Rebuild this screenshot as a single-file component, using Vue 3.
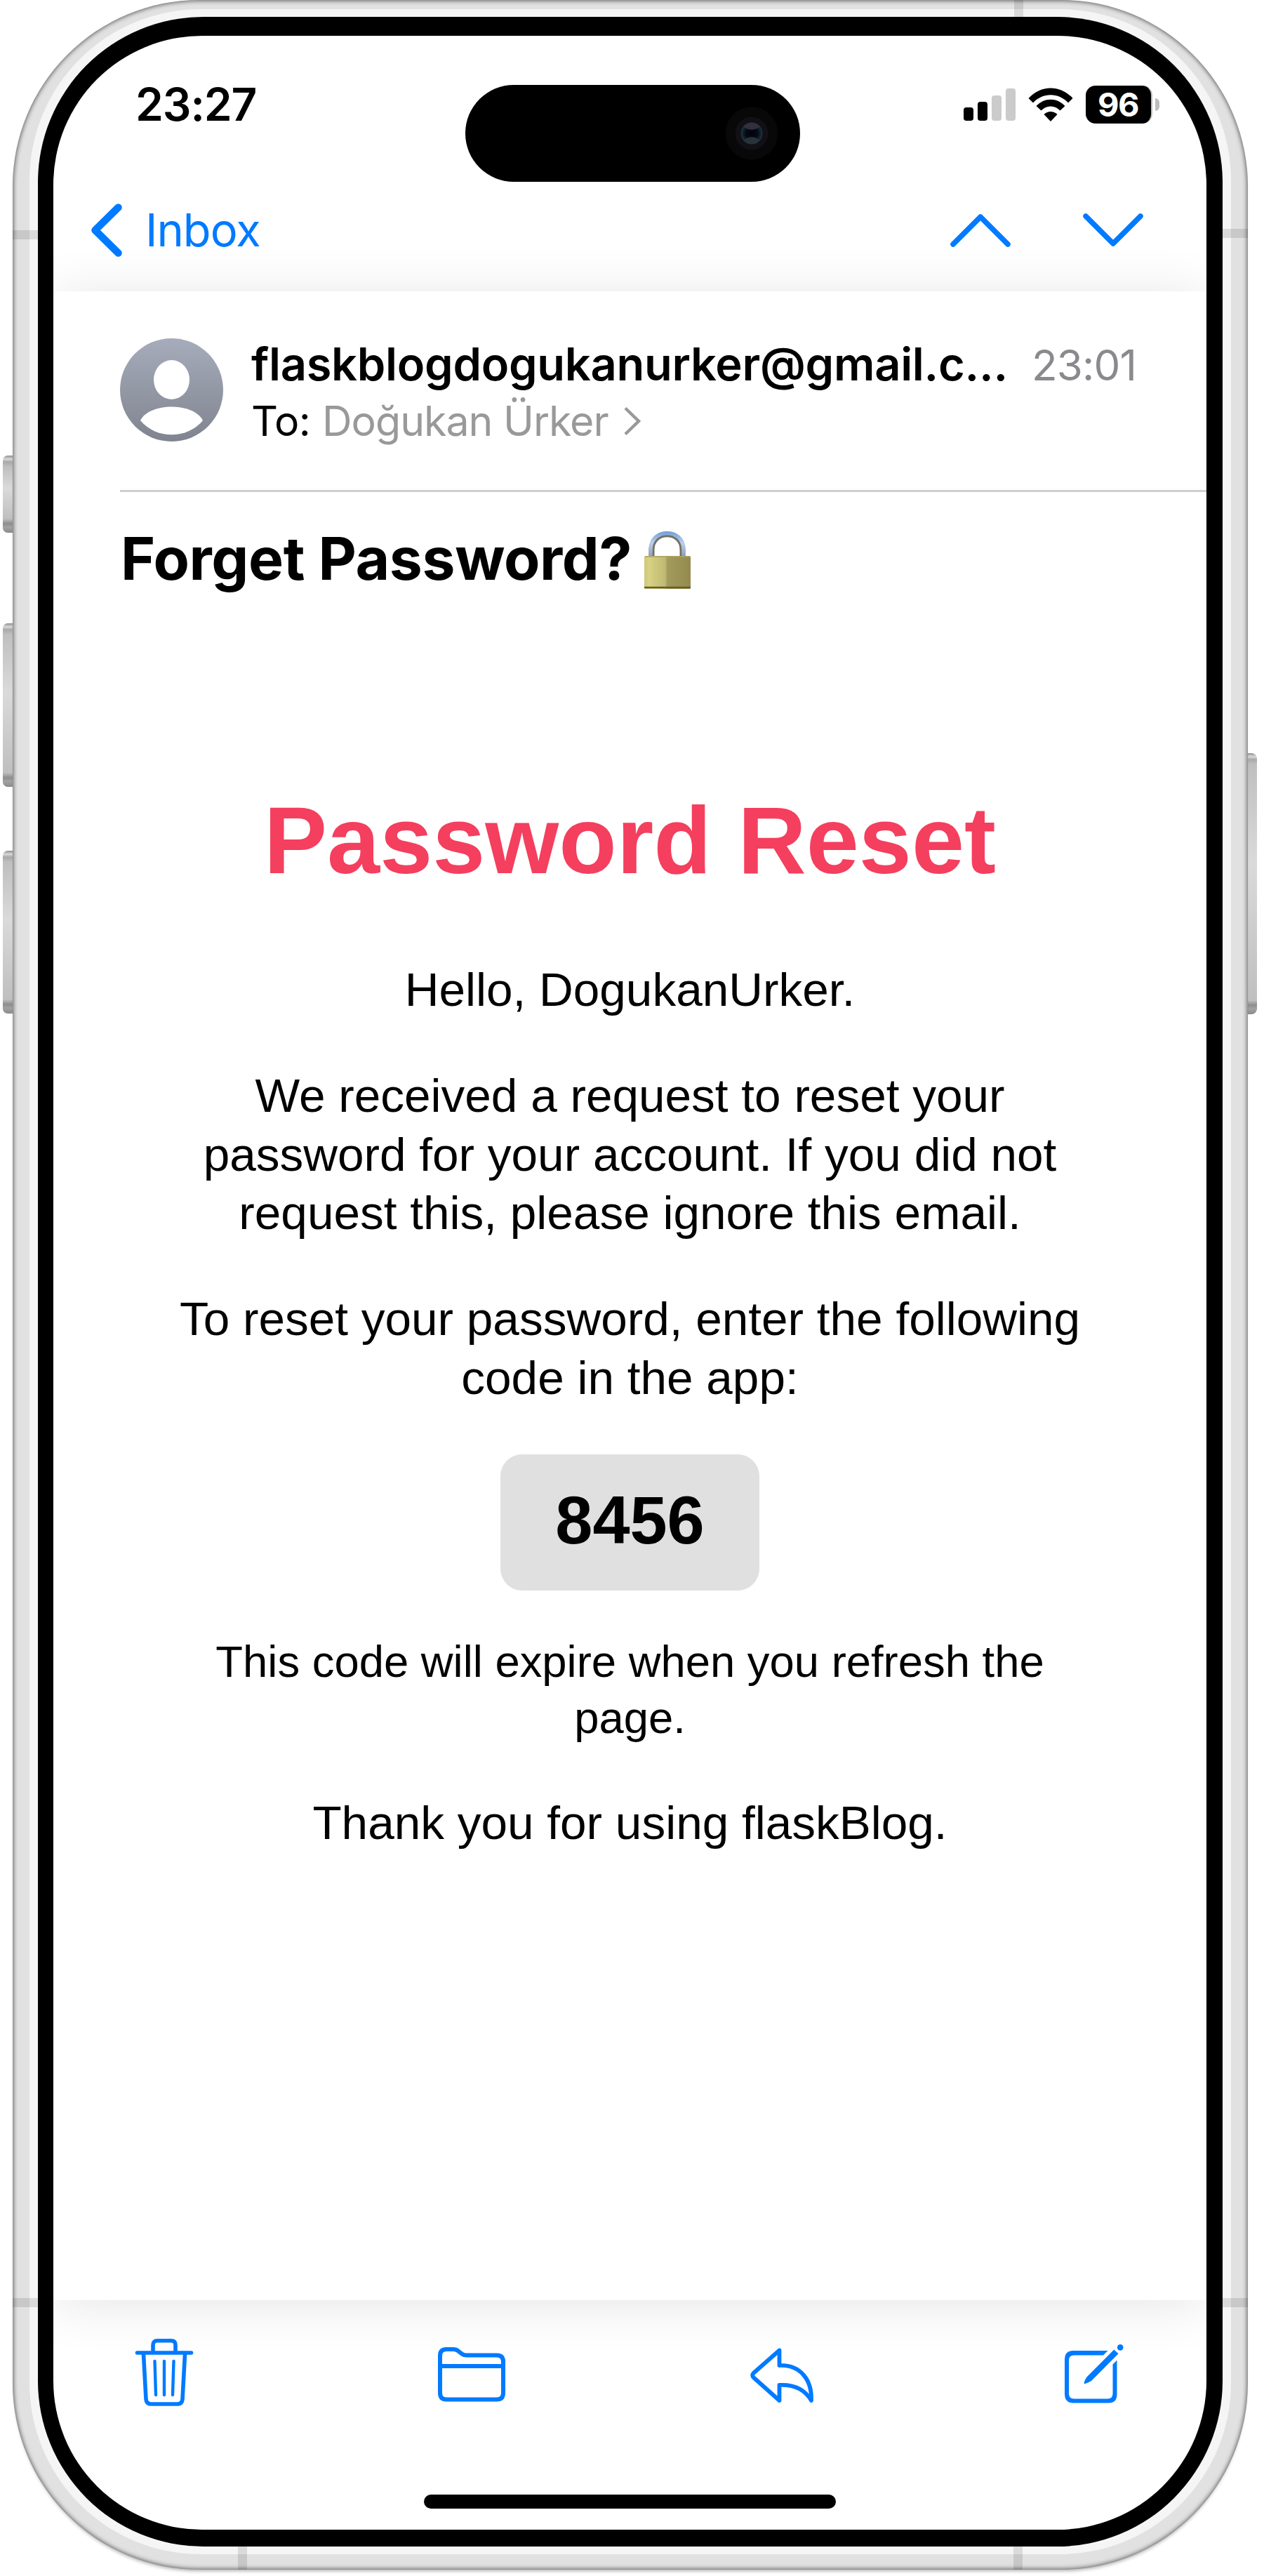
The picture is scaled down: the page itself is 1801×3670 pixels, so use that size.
<script setup>
const signal = [
  { height: 19, on: true },
  { height: 27, on: true },
  { height: 36, on: false },
  { height: 46, on: false },
]
const sideKeys = ['mute', 'volume-up', 'volume-down', 'power']
const antennas = ['lt', 'lb', 'rt', 'rb', 'top', 'bl', 'br']
</script>

<template>
  <div class="page">
    <div class="phone">
      <span v-for="k in sideKeys" :key="k" class="key" :class="k"></span>
      <div class="frame">
        <div class="rim">
          <div class="bezel">
            <div class="screen">
              <header class="top">
                <div class="status">
                  <span class="clock">23:27</span>
                  <div class="indicators">
                    <div class="signal">
                      <i v-for="(b, n) in signal" :key="n" :class="{ on: b.on }" :style="{ height: b.height + 'px' }"></i>
                    </div>
                    <svg class="wifi" width="64" height="48" viewBox="0 0 64 48">
                      <path d="M0.5 15 C18 -4.5 46 -4.5 63.500 15 L57 21.500 C43 6.500 21 6.500 7 21.500 Z" />
                      <path d="M11.500 26 C23 13.500 41 13.500 52.500 26 L45.500 32.500 C38 24.500 26 24.500 18.500 32.500 Z" />
                      <path d="M22.500 38 C28 32.500 36 32.500 41.500 38 L32 48 Z" />
                    </svg>
                    <div class="battery"><span>96</span></div>
                    <i class="cap"></i>
                  </div>
                </div>
                <nav class="nav">
                  <svg width="46" height="76" viewBox="0 0 46 76"><path d="M39.500 5.500 L6.500 38 L39.500 70.500" stroke-width="10.500" /></svg>
                  <span class="inbox">Inbox</span>
                  <svg class="up" width="86" height="50" viewBox="0 0 86 50"><path d="M4 45 L43 6 L82 45" stroke-width="7.500" /></svg>
                  <svg class="down" width="86" height="50" viewBox="0 0 86 50"><path d="M4 5 L43 44 L82 5" stroke-width="7.500" /></svg>
                </nav>
              </header>

              <main class="mail">
                <section class="sender">
                  <svg class="avatar" width="147" height="147" viewBox="0 0 147 147">
                    <defs>
                      <linearGradient id="av" x1="0" y1="0" x2="0" y2="1">
                        <stop offset="0" stop-color="#a6acbb" />
                        <stop offset="1" stop-color="#80848f" />
                      </linearGradient>
                    </defs>
                    <circle cx="73.500" cy="73.500" r="73.500" fill="url(#av)" />
                    <ellipse cx="73.500" cy="59" rx="25.500" ry="28" fill="#fff" />
                    <path d="M29 117 C42 91 105 91 118 117 C96 144 51 144 29 117 Z" fill="#fff" />
                  </svg>
                  <div class="who">
                    <div class="from">
                      <span class="address">flaskblogdogukanurker@gmail.c...</span>
                      <span class="time">23:01</span>
                    </div>
                    <div class="to">
                      <span class="label">To:</span>
                      <span class="name">Doğukan Ürker</span>
                      <svg width="26" height="42" viewBox="0 0 26 42"><path d="M3 2.500 L22 21 L3 39.500" /></svg>
                    </div>
                  </div>
                </section>

                <div class="subject">
                  <h2>Forget Password?</h2>
                  <svg width="68" height="82" viewBox="0 0 68 82">
                    <defs>
                      <linearGradient id="sh" x1="0" y1="0" x2="0" y2="1">
                        <stop offset="0" stop-color="#78a4dc" />
                        <stop offset=".4" stop-color="#b9d0ee" />
                        <stop offset="1" stop-color="#8d9cae" />
                      </linearGradient>
                      <linearGradient id="bd" x1="0" y1="0" x2="1" y2="0">
                        <stop offset="0" stop-color="#cdc77c" />
                        <stop offset=".1" stop-color="#d8d284" />
                        <stop offset=".45" stop-color="#bfb973" />
                        <stop offset=".5" stop-color="#a19b5c" />
                        <stop offset="1" stop-color="#948a4f" />
                      </linearGradient>
                    </defs>
                    <path d="M11.500 36 V25 C11.500 -4 55.500 -4 55.500 25 V36" fill="none" stroke="#746f62" stroke-width="8" />
                    <path d="M10 36 V25 C10 -6.500 57 -6.500 57 25 V36" fill="none" stroke="url(#sh)" stroke-width="5.500" />
                    <rect x="1" y="34" width="66" height="47" rx="2" fill="url(#bd)" />
                    <path d="M1 79 H67" stroke="#695c25" stroke-width="2.500" />
                    <path d="M2 35 H66" stroke="#aaa365" stroke-width="1.500" />
                  </svg>
                </div>

                <article class="body">
                  <h1>Password Reset</h1>
                  <p>Hello, DogukanUrker.</p>
                  <p>We received a request to reset your<br />password for your account. If you did not<br />request this, please ignore this email.</p>
                  <p>To reset your password, enter the following<br />code in the app:</p>
                  <div class="code">8456</div>
                  <p class="note">This code will expire when you refresh the<br />page.</p>
                  <p>Thank you for using flaskBlog.</p>
                </article>
              </main>

              <footer class="bottom">
                <div class="tools">
                  <svg width="82" height="96" viewBox="0 0 82 96">
                    <path d="M2.500 20 H79.500 M25 20 V9 Q25 2.800 31 2.800 H51 Q57 2.800 57 9 V20 M11.500 22 L15 86 Q15.500 93 22 93 H60 Q66.500 93 67 86 L70.500 22" stroke-width="5.600" />
                    <path d="M27.500 32 L29 80 M41 32 V80 M54.500 32 L53 80" stroke-width="4.400" />
                  </svg>
                  <svg class="folder" width="96" height="78" viewBox="0 0 96 78">
                    <path d="M3 65 V12 Q3 3 12 3 H22 Q26 3 29 5.500 L34 9.500 Q37 11.500 41 11.500 H84 Q93 11.500 93 20.500 V65 Q93 74.500 84 74.500 H12 Q3 74.500 3 65 Z M3 27 H93" stroke-width="6" />
                  </svg>
                  <svg class="reply" width="91" height="78" viewBox="0 0 91 78">
                    <path d="M41.500 3.500 L4.500 36 Q2 39 4.500 42 L41.500 75 V53 C62 52 77 58 87 75 C88 46 72 24 41.500 25 Z" stroke-width="5.800" />
                  </svg>
                  <svg class="compose" width="84" height="84" viewBox="0 0 84 84">
                    <path class="fill" d="M61.500 9 H12 Q0 9 0 21 V71 Q0 83.500 12 83.500 H62.500 Q74.500 83.500 74.500 71 V22.500 L68.500 28.500 V70 Q68.500 77.500 61 77.500 H13.500 Q6 77.500 6 70 V23 Q6 15.500 13.500 15.500 H55 Z" />
                    <path class="fill" d="M70.300 7.500 L76.500 13.300 L38 52 Q34 54.500 28.800 56.300 Q27.200 56.500 27.700 54.800 Q28.500 50.500 31.500 46.500 Z" />
                    <circle class="fill" cx="79.200" cy="4.400" r="4.300" />
                  </svg>
                </div>
                <div class="home"></div>
              </footer>

              <div class="island">
                <svg width="76" height="76" viewBox="0 0 76 76">
                  <defs>
                    <radialGradient id="lens">
                      <stop offset="0" stop-color="#00020c" />
                      <stop offset=".55" stop-color="#040a14" />
                      <stop offset="1" stop-color="#1d3440" />
                    </radialGradient>
                  </defs>
                  <circle cx="38" cy="38" r="37.500" fill="#080808" />
                  <circle cx="38" cy="38" r="23.500" fill="#111015" />
                  <circle cx="38" cy="38" r="15.500" fill="url(#lens)" />
                  <path d="M26 28.500 A15.500 15.500 0 0 1 50 28.500 Q38 37 26 28.500 Z" fill="#32303c" />
                  <path d="M26 47.500 A15.500 15.500 0 0 0 50 47.500 Q38 39 26 47.500 Z" fill="#29323b" />
                </svg>
              </div>
            </div>
          </div>
        </div>
        <i v-for="a in antennas" :key="a" class="antenna" :class="a"></i>
        <i class="edge"></i>
      </div>
    </div>
  </div>
</template>

<style>
body {
  margin: 0;
  background: #fff;
}
</style>

<style scoped>
.page {
  width: 1801px;
  height: 3670px;
  overflow: hidden;
  background: #fff;
  color: #000;
  font-family: Inter, "Liberation Sans", sans-serif;
}
.page * {
  box-sizing: border-box;
}
svg {
  display: block;
  flex: none;
  overflow: visible;
}
.phone {
  position: relative;
  width: 1760px;
  height: 3661px;
  margin-left: 18px;
}

/* hardware */
.key {
  position: absolute;
  width: 20px;
  left: -14px;
  border-radius: 7px 0 0 7px;
  background: linear-gradient(#8f8f90 0, #d9d9db 5px, #a8a9ac 9px, #bfbfbf 16px, #dadada 42%, #bfbfbf calc(100% - 20px), #8d8d8d calc(100% - 13px), #a0a2a4 calc(100% - 8px), #8a8a8a 100%);
}
.mute { top: 649px; height: 110px; }
.volume-up { top: 888px; height: 233px; }
.volume-down { top: 1212px; height: 232px; }
.power {
  top: 1073px;
  height: 372px;
  left: 1753px;
  border-radius: 0 8px 8px 0;
}
.frame {
  position: relative;
  height: 3661px;
  padding: 13px 24px 22px;
  border-radius: 266px;
  background: #e1e1e1;
  box-shadow: 0 5px 5px -3px rgba(0, 0, 0, 0.3);
}
.edge {
  position: absolute;
  inset: 0;
  border-radius: 266px;
  box-shadow: inset 0 0 6px 1px rgba(0, 0, 0, 0.6);
}
.rim {
  height: 3626px;
  padding: 11px 12px;
  border-radius: 244px;
  background: #f5f5f5;
}
.bezel {
  height: 3604px;
  padding: 27px 23px 24px 22px;
  border-radius: 236px;
  background: #000;
}
.screen {
  position: relative;
  display: flex;
  flex-direction: column;
  height: 3553px;
  border-radius: 212px;
  background: #fff;
  overflow: hidden;
}
.antenna {
  position: absolute;
  width: 36px;
  height: 13px;
  background: rgba(0, 0, 0, 0.11);
}
.lt { left: 0; top: 328px; }
.lb { left: 0; top: 3274px; }
.rt { right: 0; top: 326px; }
.rb { right: 0; top: 3274px; }
.top.antenna { left: 1427px; top: 0; width: 13px; height: 24px; }
.bl { left: 321px; bottom: 0; width: 13px; height: 33px; }
.br { left: 1426px; bottom: 0; width: 13px; height: 33px; }

/* status and navigation */
header.top {
  height: 364px;
}
.status {
  display: flex;
  justify-content: space-between;
  align-items: center;
  height: 70px;
  margin-top: 63px;
  padding: 0 67px 0 117px;
}
.clock {
  font-size: 64px;
  line-height: 70px;
  font-weight: 600;
  letter-spacing: -1.1px;
}
.indicators {
  display: flex;
  align-items: center;
}
.signal {
  display: flex;
  align-items: flex-end;
  gap: 6px;
  height: 46px;
}
.signal i {
  width: 14px;
  border-radius: 4px;
  background: #cbcbcb;
}
.signal i.on {
  background: #000;
}
.wifi {
  margin: 0 18px;
}
.battery {
  width: 95px;
  height: 54px;
  padding-right: 1px;
  border-radius: 14px;
  border-right: 2px solid #bdbdbd;
  background: #000;
  color: #fff;
  font-size: 47px;
  line-height: 54px;
  font-weight: 700;
  text-align: center;
  letter-spacing: -1.5px;
}
.cap {
  width: 6px;
  height: 18px;
  margin-left: 4px;
  border-radius: 0 6px 6px 0;
  background: #bdbdbd;
}
.nav {
  display: flex;
  align-items: center;
  height: 80px;
  margin-top: 104px;
  padding-left: 53px;
  color: #007aff;
}
.nav path,
.tools path {
  fill: none;
  stroke: #007aff;
  stroke-linecap: round;
  stroke-linejoin: round;
}
.inbox {
  width: 1141px;
  padding-left: 32px;
  font-size: 65px;
  line-height: 80px;
  letter-spacing: -1px;
}
.up {
  margin-left: 38px;
}
.down {
  margin-left: 103px;
}

/* message */
.mail {
  position: relative;
  height: 2862px;
  background: #fff;
  box-shadow: 0 6px 70px rgba(0, 0, 0, 0.105);
}
.sender {
  display: flex;
  height: 286px;
  margin-left: 95px;
  padding-top: 67px;
  border-bottom: 3px solid #cfcfcf;
}
.who {
  width: 1300px;
  margin-left: 40px;
}
.from {
  display: flex;
  align-items: baseline;
  height: 80px;
  margin-top: -3px;
  line-height: 80px;
  white-space: nowrap;
}
.address {
  width: 1112px;
  font-size: 65px;
  font-weight: 600;
  letter-spacing: -0.3px;
}
.time {
  font-size: 60px;
  color: #8a8a8e;
  letter-spacing: -0.8px;
}
.to {
  display: flex;
  align-items: center;
  height: 82px;
  font-size: 59px;
  line-height: 82px;
  white-space: nowrap;
}
.label {
  width: 101px;
  letter-spacing: -0.5px;
}
.name {
  width: 429px;
  color: #999;
  letter-spacing: -1px;
}
.to path {
  fill: none;
  stroke: #999;
  stroke-width: 4.5;
}
.subject {
  display: flex;
  height: 110px;
  margin: 40px 0 0 96px;
}
.subject h2 {
  width: 745px;
  margin: 0;
  font-size: 84px;
  line-height: 110px;
  font-weight: 700;
  letter-spacing: -0.4px;
  white-space: nowrap;
}
.subject svg {
  margin-top: 17px;
}
.body {
  margin-top: 267px;
  text-align: center;
  font-family: "Liberation Sans", Arial, sans-serif;
  font-size: 67.5px;
  line-height: 83.5px;
  white-space: nowrap;
}
.body h1 {
  margin: 0 0 90px;
  color: #f43f5e;
  font-size: 135px;
  line-height: 160px;
  font-weight: 700;
}
.body p {
  margin: 0 0 67.5px;
}
.code {
  width: 369px;
  height: 194px;
  margin: 0 auto 61px;
  border-radius: 31px;
  background: #e0e0e0;
  font-size: 95.5px;
  line-height: 188px;
  font-weight: 700;
}
.body .note {
  font-size: 63.4px;
  line-height: 80px;
  margin-bottom: 68.5px;
}

/* toolbar */
.bottom {
  height: 327px;
}
.tools {
  display: flex;
  height: 104px;
  margin-top: 55px;
  padding-left: 117px;
}
.folder {
  margin: 12px 0 0 349px;
}
.reply {
  margin: 13px 0 0 349px;
}
.compose {
  margin: 8px 0 0 357px;
}
.tools .fill {
  fill: #007aff;
  stroke: none;
}
.home {
  width: 587px;
  height: 20px;
  margin: 118px auto 0;
  border-radius: 10px;
  background: #000;
}
.island {
  position: absolute;
  left: 587px;
  top: 70px;
  display: flex;
  align-items: center;
  justify-content: flex-end;
  width: 477px;
  height: 138px;
  padding-right: 31px;
  border-radius: 69px;
  background: #000;
}
</style>
